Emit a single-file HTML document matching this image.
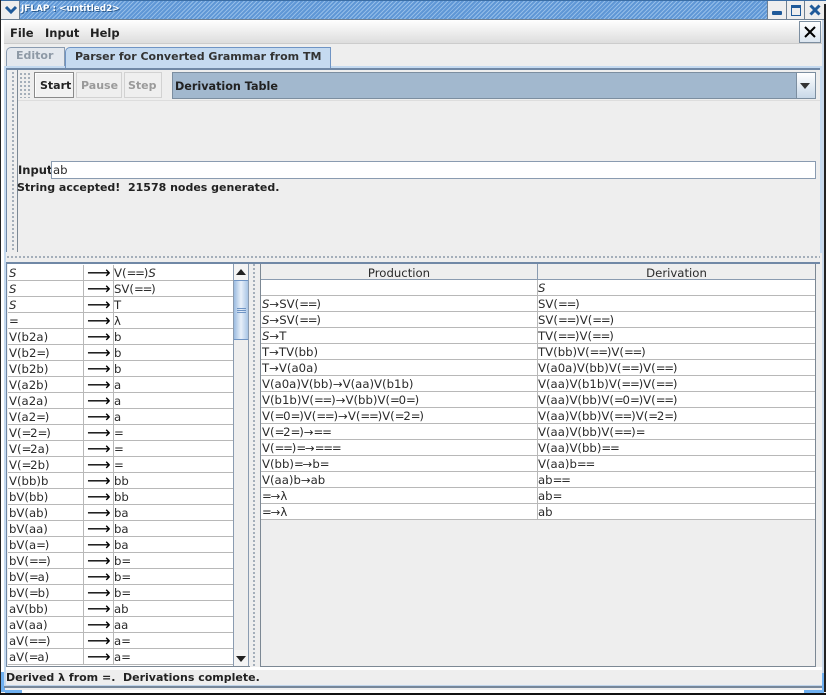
<!DOCTYPE html>
<html><head><meta charset="utf-8"><style>
html,body{margin:0;padding:0;width:826px;height:695px;overflow:hidden;background:#eee}
*{box-sizing:border-box}
body{position:relative;font-family:"DejaVu Sans",sans-serif;font-size:11.7px;color:#2a2a2a}
div{position:absolute}
u{text-decoration:none;letter-spacing:-1.2px}
.b{font-weight:bold;white-space:nowrap;color:#222;font-size:11px}
.dots{background-image:radial-gradient(circle at 1px 1px,#8f9dab 0.8px,transparent 1.1px);background-size:4px 4px}
.r{position:absolute;height:16px;border-bottom:1px solid #b8b8b8;background:#fff;white-space:nowrap;line-height:15px;font-size:11.7px}
.r span{position:absolute;top:1px;white-space:nowrap}
.l{left:8px;width:225px}
.l .c1{left:1px}.l .c2{left:79px;top:0;font-size:16.5px;line-height:15px;color:#000}.l .c3{left:106px}
.l .v1{position:absolute;left:75px;top:0;width:1px;height:16px;background:#b8b8b8}
.l .v2{position:absolute;left:105px;top:0;width:1px;height:16px;background:#b8b8b8}
.p{left:261px;width:554px}
.p .c1{left:1px}.p .c3{left:277px}
.p .v1{position:absolute;left:276px;top:0;width:1px;height:16px;background:#b8b8b8}
</style></head><body>
<!-- window frame -->
<div style="left:0;top:0;width:826px;height:695px;background:#eee"></div>
<div style="left:0;top:0;width:826px;height:20px;background:#6fa3dc;background-image:repeating-linear-gradient(135deg,#5f97d6 0,#5f97d6 2px,#94bde8 2px,#94bde8 3px)"></div>
<div style="left:0;top:0;width:826px;height:1px;background:#3b6ea5"></div>
<div style="left:0;top:19px;width:826px;height:1px;background:#6d7f92"></div>
<div style="left:0;top:1px;width:20px;height:18px;background:#eee;border-right:1px solid #6d7f92"></div>
<svg style="position:absolute;left:4px;top:4px" width="14" height="12"><path d="M2 3 L7 8 L12 3" fill="none" stroke="#1f5a9a" stroke-width="3"/></svg>
<div style="left:21px;top:3px;width:100px;height:14px;color:#fff;font-weight:bold;white-space:nowrap;font-size:8.9px;line-height:13px;text-shadow:1px 1px 0 #2d5c8f">JFLAP : &lt;untitled2&gt;</div>
<div style="left:768px;top:1px;width:58px;height:18px;background:#eee"></div>
<div style="left:786px;top:1px;width:1px;height:18px;background:#6d7f92"></div>
<div style="left:804px;top:1px;width:1px;height:18px;background:#6d7f92"></div>
<div style="left:767px;top:1px;width:1px;height:18px;background:#6d7f92"></div>
<div style="left:772px;top:11px;width:10px;height:4px;background:#1f5a9a;border-radius:1px"></div>
<div style="left:791px;top:5px;width:10px;height:11px;border:1px solid #1f5a9a;border-top:3px solid #1f5a9a"></div>
<svg style="position:absolute;left:809px;top:4px" width="12" height="12"><path d="M1.5 1.5 L10.5 10.5 M10.5 1.5 L1.5 10.5" stroke="#1f5a9a" stroke-width="3"/></svg>
<div style="left:0;top:0;width:1px;height:695px;background:#222"></div>
<div style="left:824px;top:4px;width:2px;height:688px;background:#222"></div>
<div style="left:0;top:693px;width:826px;height:2px;background:#111"></div>
<div style="left:1px;top:20px;width:3px;height:672px;background:#fff"></div>
<div style="left:1px;top:672px;width:4px;height:20px;background:#6fb0f0"></div>
<div style="left:822px;top:20px;width:2px;height:672px;background:#c8d8ea"></div>
<div style="left:822px;top:673px;width:2px;height:20px;background:#6fb0f0"></div>
<div style="left:5px;top:690px;width:17px;height:3px;background:#6fb0f0"></div>
<div style="left:804px;top:690px;width:18px;height:3px;background:#6fb0f0"></div>
<div style="left:22px;top:690px;width:782px;height:3px;background:#fff"></div>
<div style="left:4px;top:685px;width:818px;height:1px;background:#c0d4ea"></div>
<div style="left:4px;top:686px;width:818px;height:2px;background:#76879a"></div>
<!-- menu bar -->
<div style="left:4px;top:20px;width:818px;height:24px;background:linear-gradient(#fff,#ddd);border-bottom:1px solid #ccc"></div>
<div class="b" style="left:10px;top:26px;font-size:11.5px">File</div>
<div class="b" style="left:45px;top:26px;font-size:11.5px">Input</div>
<div class="b" style="left:90px;top:26px;font-size:11.5px">Help</div>
<div style="left:799px;top:21px;width:22px;height:22px;border:1px solid #7c8ea0;background:linear-gradient(#fff,#dce6f0)"></div>
<svg style="position:absolute;left:804px;top:26px" width="12" height="12"><path d="M1 1 L11 11 M11 1 L1 11" stroke="#000" stroke-width="2"/></svg>
<!-- tabs -->
<div style="left:6px;top:47px;width:59px;height:20px;background:#e4e8ee;border:1px solid #8a9bb0;border-bottom:0;border-radius:5px 0 0 0"></div>
<div class="b" style="left:16px;top:49px;color:#8e99a6">Editor</div>
<div style="left:4px;top:66px;width:818px;height:2px;background:#c5daf0"></div>
<div style="left:65px;top:47px;width:266px;height:21px;background:#c5daf0;border:1px solid #6f94c4;border-bottom:0;border-radius:5px 0 0 0"></div>
<div class="b" style="left:75px;top:50px;color:#333">Parser for Converted Grammar from TM</div>
<div style="left:6px;top:68px;width:814px;height:2px;background:#7088a6"></div>
<div style="left:4px;top:66px;width:2px;height:187px;background:#c5daf0"></div>
<div style="left:6px;top:68px;width:1px;height:185px;background:#7088a6"></div>
<div style="left:820px;top:66px;width:2px;height:187px;background:#c5daf0"></div>
<!-- toolbar -->
<div class="dots" style="left:12px;top:72px;width:4px;height:180px"></div>
<div style="left:17px;top:70px;width:1px;height:183px;background:#7c8894"></div>
<div class="dots" style="left:20px;top:73px;width:11px;height:25px"></div>
<div style="left:18px;top:100px;width:802px;height:1px;background:#ddd"></div>
<div style="left:34px;top:72px;width:40px;height:26px;background:#f2f2f2;border:1px solid #8a8a8a;box-shadow:inset 1px 1px 0 #fff"></div>
<div class="b" style="left:40px;top:79px">Start</div>
<div style="left:76px;top:72px;width:46px;height:26px;background:#efefef;border:1px solid #d2d2d2"></div>
<div class="b" style="left:81px;top:79px;color:#9a9a9a">Pause</div>
<div style="left:124px;top:72px;width:38px;height:26px;background:#efefef;border:1px solid #d2d2d2"></div>
<div class="b" style="left:128px;top:79px;color:#9a9a9a">Step</div>
<div style="left:172px;top:72px;width:644px;height:27px;background:#a2b8ce;border:1px solid #7c8ea0"></div>
<div style="left:796px;top:73px;width:19px;height:25px;background:linear-gradient(#fff,#c8d8e8);border-left:1px solid #7c8ea0"></div>
<div style="left:800px;top:83px;width:0;height:0;border-left:5px solid transparent;border-right:5px solid transparent;border-top:6px solid #333"></div>
<div class="b" style="left:175px;top:80px;font-size:11.2px">Derivation Table</div>
<!-- input -->
<div class="b" style="left:18px;top:163px;font-size:11.5px">Input</div>
<div style="left:51px;top:161px;width:765px;height:18px;background:#fff;border:1px solid #8a9bb0"></div>
<div style="left:53px;top:163px">ab</div>
<div class="b" style="left:17px;top:181px">String accepted!&nbsp; 21578 nodes generated.</div>
<!-- splitter -->
<div style="left:6px;top:252px;width:814px;height:10px;background:#eee"></div>
<div class="dots" style="left:7px;top:256px;width:813px;height:4px"></div>
<div style="left:6px;top:262px;width:814px;height:2px;background:#7088a6"></div>
<div style="left:4px;top:253px;width:2px;height:432px;background:#c5daf0"></div>
<div style="left:6px;top:262px;width:1px;height:405px;background:#7088a6"></div>
<!-- left table area -->
<div style="left:8px;top:264px;width:226px;height:402px;background:#fff"></div>
<div class="r l" style="top:265px"><i class="v1"></i><i class="v2"></i><span class="c1"><i>S</i></span><span class="c2">⟶</span><span class="c3">V(<u>==</u>)<i>S</i></span></div>
<div class="r l" style="top:281px"><i class="v1"></i><i class="v2"></i><span class="c1"><i>S</i></span><span class="c2">⟶</span><span class="c3">SV(<u>==</u>)</span></div>
<div class="r l" style="top:297px"><i class="v1"></i><i class="v2"></i><span class="c1"><i>S</i></span><span class="c2">⟶</span><span class="c3">T</span></div>
<div class="r l" style="top:313px"><i class="v1"></i><i class="v2"></i><span class="c1">=</span><span class="c2">⟶</span><span class="c3">λ</span></div>
<div class="r l" style="top:329px"><i class="v1"></i><i class="v2"></i><span class="c1">V(b2a)</span><span class="c2">⟶</span><span class="c3">b</span></div>
<div class="r l" style="top:345px"><i class="v1"></i><i class="v2"></i><span class="c1">V(b2<u>=</u>)</span><span class="c2">⟶</span><span class="c3">b</span></div>
<div class="r l" style="top:361px"><i class="v1"></i><i class="v2"></i><span class="c1">V(b2b)</span><span class="c2">⟶</span><span class="c3">b</span></div>
<div class="r l" style="top:377px"><i class="v1"></i><i class="v2"></i><span class="c1">V(a2b)</span><span class="c2">⟶</span><span class="c3">a</span></div>
<div class="r l" style="top:393px"><i class="v1"></i><i class="v2"></i><span class="c1">V(a2a)</span><span class="c2">⟶</span><span class="c3">a</span></div>
<div class="r l" style="top:409px"><i class="v1"></i><i class="v2"></i><span class="c1">V(a2<u>=</u>)</span><span class="c2">⟶</span><span class="c3">a</span></div>
<div class="r l" style="top:425px"><i class="v1"></i><i class="v2"></i><span class="c1">V(<u>=</u>2<u>=</u>)</span><span class="c2">⟶</span><span class="c3">=</span></div>
<div class="r l" style="top:441px"><i class="v1"></i><i class="v2"></i><span class="c1">V(<u>=</u>2a)</span><span class="c2">⟶</span><span class="c3">=</span></div>
<div class="r l" style="top:457px"><i class="v1"></i><i class="v2"></i><span class="c1">V(<u>=</u>2b)</span><span class="c2">⟶</span><span class="c3">=</span></div>
<div class="r l" style="top:473px"><i class="v1"></i><i class="v2"></i><span class="c1">V(bb)b</span><span class="c2">⟶</span><span class="c3">bb</span></div>
<div class="r l" style="top:489px"><i class="v1"></i><i class="v2"></i><span class="c1">bV(bb)</span><span class="c2">⟶</span><span class="c3">bb</span></div>
<div class="r l" style="top:505px"><i class="v1"></i><i class="v2"></i><span class="c1">bV(ab)</span><span class="c2">⟶</span><span class="c3">ba</span></div>
<div class="r l" style="top:521px"><i class="v1"></i><i class="v2"></i><span class="c1">bV(aa)</span><span class="c2">⟶</span><span class="c3">ba</span></div>
<div class="r l" style="top:537px"><i class="v1"></i><i class="v2"></i><span class="c1">bV(a<u>=</u>)</span><span class="c2">⟶</span><span class="c3">ba</span></div>
<div class="r l" style="top:553px"><i class="v1"></i><i class="v2"></i><span class="c1">bV(<u>==</u>)</span><span class="c2">⟶</span><span class="c3">b=</span></div>
<div class="r l" style="top:569px"><i class="v1"></i><i class="v2"></i><span class="c1">bV(<u>=</u>a)</span><span class="c2">⟶</span><span class="c3">b=</span></div>
<div class="r l" style="top:585px"><i class="v1"></i><i class="v2"></i><span class="c1">bV(<u>=</u>b)</span><span class="c2">⟶</span><span class="c3">b=</span></div>
<div class="r l" style="top:601px"><i class="v1"></i><i class="v2"></i><span class="c1">aV(bb)</span><span class="c2">⟶</span><span class="c3">ab</span></div>
<div class="r l" style="top:617px"><i class="v1"></i><i class="v2"></i><span class="c1">aV(aa)</span><span class="c2">⟶</span><span class="c3">aa</span></div>
<div class="r l" style="top:633px"><i class="v1"></i><i class="v2"></i><span class="c1">aV(<u>==</u>)</span><span class="c2">⟶</span><span class="c3">a=</span></div>
<div class="r l" style="top:649px"><i class="v1"></i><i class="v2"></i><span class="c1">aV(<u>=</u>a)</span><span class="c2">⟶</span><span class="c3">a=</span></div>
<!-- scrollbar -->
<div style="left:233px;top:264px;width:16px;height:402px;background:#eee;border-left:1px solid #8a9bb0;border-right:1px solid #8a9bb0"></div>
<div style="left:234px;top:264px;width:14px;height:16px;background:#f4f4f4"></div>
<div style="left:236px;top:269px;width:0;height:0;border-left:5px solid transparent;border-right:5px solid transparent;border-bottom:6px solid #222"></div>
<div style="left:234px;top:280px;width:14px;height:60px;background:linear-gradient(90deg,#9cbce0,#e8f0fa 50%,#a8c4e4);border-top:1px solid #6f94c4;border-bottom:1px solid #6f94c4"></div>
<div style="left:237px;top:308px;width:9px;height:5px;border-top:1px solid #6f94c4;border-bottom:1px solid #6f94c4"></div>
<div style="left:237px;top:310px;width:9px;height:1px;background:#6f94c4"></div>
<div style="left:234px;top:650px;width:14px;height:16px;background:#f4f4f4"></div>
<div style="left:236px;top:656px;width:0;height:0;border-left:5px solid transparent;border-right:5px solid transparent;border-top:6px solid #222"></div>
<!-- vertical splitter -->
<div class="dots" style="left:253px;top:264px;width:4px;height:402px"></div>
<div style="left:260px;top:264px;width:1px;height:403px;background:#7c8894"></div>
<div style="left:815px;top:264px;width:1px;height:403px;background:#7c8894"></div>
<div style="left:260px;top:666px;width:556px;height:1px;background:#7c8894"></div>
<div style="left:6px;top:666px;width:244px;height:1px;background:#7c8894"></div>
<!-- right table -->
<div style="left:261px;top:264px;width:554px;height:16px;background:#eee;border-bottom:1px solid #8a9bb0"></div>
<div style="left:537px;top:264px;width:1px;height:16px;background:#8a9bb0"></div>
<div style="left:261px;top:266px;width:276px;text-align:center">Production</div>
<div style="left:538px;top:266px;width:277px;text-align:center">Derivation</div>
<div class="r p" style="top:280px"><i class="v1"></i><span class="c1"></span><span class="c3"><i>S</i></span></div>
<div class="r p" style="top:296px"><i class="v1"></i><span class="c1"><i>S</i>→SV(<u>==</u>)</span><span class="c3">SV(<u>==</u>)</span></div>
<div class="r p" style="top:312px"><i class="v1"></i><span class="c1"><i>S</i>→SV(<u>==</u>)</span><span class="c3">SV(<u>==</u>)V(<u>==</u>)</span></div>
<div class="r p" style="top:328px"><i class="v1"></i><span class="c1"><i>S</i>→T</span><span class="c3">TV(<u>==</u>)V(<u>==</u>)</span></div>
<div class="r p" style="top:344px"><i class="v1"></i><span class="c1">T→TV(bb)</span><span class="c3">TV(bb)V(<u>==</u>)V(<u>==</u>)</span></div>
<div class="r p" style="top:360px"><i class="v1"></i><span class="c1">T→V(a0a)</span><span class="c3">V(a0a)V(bb)V(<u>==</u>)V(<u>==</u>)</span></div>
<div class="r p" style="top:376px"><i class="v1"></i><span class="c1">V(a0a)V(bb)→V(aa)V(b1b)</span><span class="c3">V(aa)V(b1b)V(<u>==</u>)V(<u>==</u>)</span></div>
<div class="r p" style="top:392px"><i class="v1"></i><span class="c1">V(b1b)V(<u>==</u>)→V(bb)V(<u>=</u>0<u>=</u>)</span><span class="c3">V(aa)V(bb)V(<u>=</u>0<u>=</u>)V(<u>==</u>)</span></div>
<div class="r p" style="top:408px"><i class="v1"></i><span class="c1">V(<u>=</u>0<u>=</u>)V(<u>==</u>)→V(<u>==</u>)V(<u>=</u>2<u>=</u>)</span><span class="c3">V(aa)V(bb)V(<u>==</u>)V(<u>=</u>2<u>=</u>)</span></div>
<div class="r p" style="top:424px"><i class="v1"></i><span class="c1">V(<u>=</u>2<u>=</u>)→<u>==</u></span><span class="c3">V(aa)V(bb)V(<u>==</u>)<u>=</u></span></div>
<div class="r p" style="top:440px"><i class="v1"></i><span class="c1">V(<u>==</u>)<u>=</u>→<u>===</u></span><span class="c3">V(aa)V(bb)<u>==</u></span></div>
<div class="r p" style="top:456px"><i class="v1"></i><span class="c1">V(bb)<u>=</u>→b<u>=</u></span><span class="c3">V(aa)b<u>==</u></span></div>
<div class="r p" style="top:472px"><i class="v1"></i><span class="c1">V(aa)b→ab</span><span class="c3">ab<u>==</u></span></div>
<div class="r p" style="top:488px"><i class="v1"></i><span class="c1"><u>=</u>→λ</span><span class="c3">ab<u>=</u></span></div>
<div class="r p" style="top:504px"><i class="v1"></i><span class="c1"><u>=</u>→λ</span><span class="c3">ab</span></div>
<!-- status -->
<div style="left:6px;top:667px;width:816px;height:3px;background:#fff"></div>
<div class="b" style="left:6px;top:671px">Derived λ from =.&nbsp; Derivations complete.</div>
</body></html>
